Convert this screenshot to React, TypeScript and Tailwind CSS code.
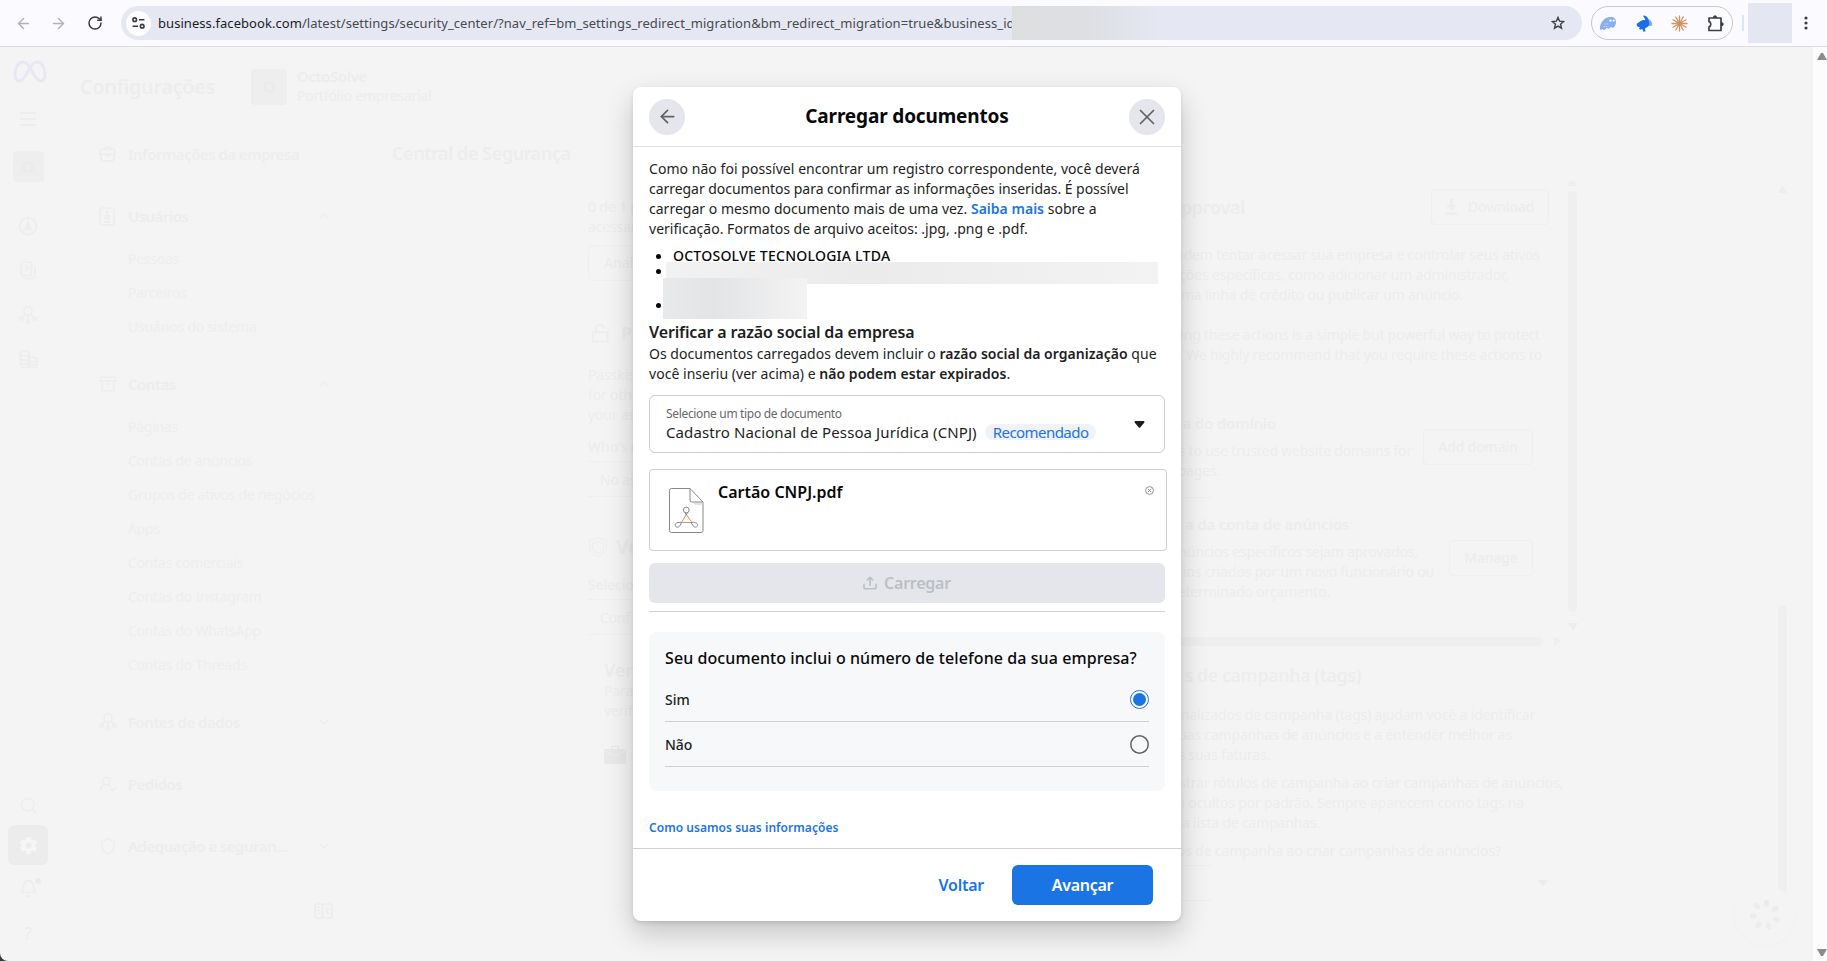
import type { ReactNode } from "react";
import {
  Archive,
  ArrowLeft,
  ArrowRight,
  Bell,
  ChevronDown,
  ChevronUp,
  LockOpen,
  RotateCw,
  Search,
  Shield,
  UserRoundCheck,
  X,
} from "lucide-react";
import { IoMdSettings } from "react-icons/io";

type NavGroup = {
  label: string;
  icon: ReactNode;
  state?: "open" | "closed";
  items?: Array<string>;
}

function NodesIcon() {
  return (
    <svg width="18" height="18" viewBox="0 0 18 18" fill="none" stroke="currentColor" strokeWidth="1.5">
      <circle cx="9" cy="4.9" r="4.1" />
      <circle cx="2.4" cy="12.8" r="1.6" />
      <circle cx="9" cy="15.8" r="1.5" />
      <circle cx="15.6" cy="12.8" r="1.6" />
      <path d="M6.300 8 3.400 11.500M9 9v5.300M11.700 8 14.600 11.500" />
    </svg>
  )
}

function BriefcaseIcon() {
  return (
    <svg width="17" height="16" viewBox="0 0 17 16" fill="none" stroke="currentColor" strokeWidth="1.7">
      <path d="M5.500 3.200a2 2 0 0 1 2-2h2a2 2 0 0 1 2 2" />
      <path d="M1 6a2.500 2.500 0 0 1 2.500-2.500h10A2.500 2.500 0 0 1 16 6v2H1ZM2 8v4a3 3 0 0 0 3 3h7a3 3 0 0 0 3-3V8M6 8.500h5L8.500 10.300Z" />
    </svg>
  )
}

function BadgeIcon() {
  return (
    <svg width="16" height="19" viewBox="0 0 16 19" fill="none" stroke="currentColor" strokeWidth="1.7">
      <rect x="1" y="1" width="14" height="17" rx="1.500" />
      <path d="M8 4v3M5 15h6" strokeWidth="1.800" />
      <ellipse cx="8" cy="10.200" rx="2.800" ry="1.500" />
    </svg>
  )
}

function LedgerIcon() {
  return (
    <svg width="18" height="19" viewBox="0 0 18 19" fill="none" stroke="currentColor" strokeWidth="1.600">
      <rect x="2.500" y="1" width="10" height="13.500" rx="1.800" />
      <path d="M.5 4.500h2M.5 8h2M.5 11.500h2M5.500 5.200h4.500M5.500 7.500h4.500M5.500 9.800h3M16 5v9.500a3 3 0 0 1-3 3H5.500" />
    </svg>
  )
}

function CoinsIcon() {
  return (
    <svg width="19" height="18" viewBox="0 0 19 18" fill="none" stroke="currentColor" strokeWidth="1.700">
      <rect x="1.500" y="1" width="9" height="16" rx="2.500" />
      <path d="M1.500 5c2 1.500 7 1.500 9 0M1.500 9c2 1.300 5 1.300 7.500.600M1.500 13c2 1.300 5 1.300 7.500.600" />
      <rect x="9" y="7.500" width="8.800" height="9.500" rx="2.500" />
      <path d="M9 10.800c2 1.300 6.800 1.300 8.800 0M9 13.800c2 1.300 6.800 1.300 8.800 0" />
    </svg>
  )
}

const NAV: Array<NavGroup> = [
  { label: "Informações da empresa", icon: <BriefcaseIcon /> },
  {
    label: "Usuários",
    icon: <BadgeIcon />,
    state: "open",
    items: ["Pessoas", "Parceiros", "Usuários do sistema"],
  },
  {
    label: "Contas",
    icon: <Archive size={18} />,
    state: "open",
    items: [
      "Páginas",
      "Contas de anúncios",
      "Grupos de ativos de negócios",
      "Apps",
      "Contas comerciais",
      "Contas do Instagram",
      "Contas do WhatsApp",
      "Contas do Threads",
    ],
  },
  { label: "Fontes de dados", icon: <NodesIcon />, state: "closed" },
  { label: "Pedidos", icon: <UserRoundCheck size={18} /> },
  { label: "Adequação e seguran...", icon: <Shield size={18} />, state: "closed" },
];

function BrowserBar() {
  return (
    <div className="flex h-[47px] shrink-0 items-center border-b border-[#dcdde3] bg-[#fbfbff] text-[#3c4043]">
      <ArrowLeft className="ml-[15px] text-[#b0b2b6]" size={17} strokeWidth={2} />
      <ArrowRight className="ml-[18px] text-[#b0b2b6]" size={17} strokeWidth={2} />
      <RotateCw className="ml-[20px] text-[#37393c]" size={16} strokeWidth={2.2} />
      <div className="relative ml-[18px] flex h-[34px] w-[1461px] items-center rounded-full bg-[#e5e8f3] pl-[5px]">
        <div className="flex size-[25px] items-center justify-center rounded-full bg-[#fdfdff]">
          <svg width="13" height="12" viewBox="0 0 13 12" fill="none" stroke="#37393c" strokeWidth="1.6">
            <circle cx="2.7" cy="2.7" r="1.8" />
            <path d="M7 2.7h5.4M.6 9.2H6" />
            <circle cx="10.2" cy="9.2" r="1.8" />
          </svg>
        </div>
        <span className="ml-[7px] w-[854px] overflow-hidden whitespace-nowrap pt-px text-[13px] tracking-[0.06px] text-[#474a4f]">
          <span className="text-[#1b1c1f]">business.facebook.com</span>
          /latest/settings/security_center/?nav_ref=bm_settings_redirect_migration&amp;bm_redirect_migration=true&amp;business_id
        </span>
        <div className="h-[34px] w-36 bg-linear-to-r from-[#dcdee0] via-[#dddfe2] to-[#e4e7f1]" />
        <svg className="absolute right-[17px] top-[10px]" width="14" height="14" viewBox="0 0 14 14" fill="none" stroke="#3c4043" strokeWidth="1.4">
          <path d="M7 1.4 8.6 5.2l4 .35-3.05 2.65.95 4L7 10.05 3.5 12.2l.95-4L1.4 5.55l4-.35Z" />
        </svg>
      </div>
      <div className="ml-[9px] flex h-[34px] w-[142px] items-center justify-between rounded-full border border-[#c7c8cd] px-[7px]">
        <svg width="18" height="15" viewBox="0 0 18 15">
          <path d="M1 13.500C.5 9 3.500 1.500 11 1c4-.3 6.200 1.800 6 5-.2 3.300-1.800 5.800-3.200 5.800-.9 0-1-.8-1.800-.8s-1.200 1.800-2.400 1.800-1-.8-1.800-.8S6.500 14 5 14s-1-.700-1.700-.700S1.400 14.400 1 13.500Z" fill="#86aff5" />
          <path d="M5.500 8h5M4.500 10.500h5" stroke="#d5e4fb" strokeDasharray="1.200 1.200" />
          <circle cx="11.500" cy="4.600" r="1.200" fill="#fff" />
          <circle cx="14.800" cy="4.600" r="1.100" fill="#fff" />
        </svg>
        <svg width="17" height="17" viewBox="0 0 17 17">
          <path d="M10.500 3.800c3.500.2 6 2.700 5.700 6.700l-3.700.7-2.500-3Z" fill="#7fabf3" />
          <path d="M7.200.500c3 0 4.800 1.700 5.500 4.700l.8 4.300-2 2.500-2.500 1.500.5 3H6.800l.4-1.500-1.700-1L4 14.800l-1-1.200 1-1.300C1.500 12.200.500 11 .700 9.600 1 8 2.500 7.700 4 6.500 5.400 5.300 7 4.600 9.300 5 9 3.300 7.500 2.500 7.200.500Z" fill="#1b6fe6" />
        </svg>
        <svg width="17" height="17" viewBox="-9 -9 18 18" stroke="#d3915f" strokeWidth="1.350">
          <path d="M0-8.500V8.500M-8.500 0H8.500M-4.250-7.360 4.250 7.360M-7.360-4.250 7.360 4.250M-7.360 4.250 7.360-4.250M-4.250 7.360 4.250-7.360" />
          <circle r="2.500" fill="#d3915f" stroke="none" />
        </svg>
        <svg width="18" height="17" viewBox="0 0 18 17" fill="none" stroke="#3c4043" strokeWidth="1.700">
          <path d="M2 3H14V15.500H2V11.800C4.400 11.300 4.400 7.200 2 6.700Z" strokeLinejoin="round" />
          <path d="M6.300 2.500a1.700 1.700 0 0 1 3.400 0ZM14.500 7.500a1.700 1.700 0 0 1 0 3.400Z" fill="#3c4043" strokeWidth="1" />
        </svg>
      </div>
      <div className="ml-[9px] h-4 w-[2px] bg-[#dde4f5]" />
      <div className="ml-[4px] h-10 w-11 bg-[#e4e7f2]" />
      <svg className="ml-[12px]" width="4" height="14" viewBox="0 0 4 14" fill="#3c4043">
        <circle cx="2" cy="2" r="1.600" />
        <circle cx="2" cy="7" r="1.600" />
        <circle cx="2" cy="12" r="1.600" />
      </svg>
    </div>
  )
}

function Rail() {
  return (
    <aside className="flex w-14 shrink-0 flex-col items-center">
      <svg className="ml-[4px] mt-[13px]" width="34" height="23" viewBox="0 0 34 23" fill="none" stroke="#e8e8f3" strokeWidth="2.800">
        <path d="M17 7.500C14.500 3.500 12.500 2 10 2 5 2 2 8 2 14.500c0 4 1.600 6.500 4.300 6.500 3 0 5-3 8-8.500C17.800 6 20 2 24.200 2 29 2 32 8 32 14.500c0 4-1.600 6.500-4.300 6.500-3.200 0-5.200-3.400-8-8.500Z" />
      </svg>
      <svg className="mt-[28px]" width="16" height="15" viewBox="0 0 16 15" stroke="currentColor" strokeWidth="2">
        <path d="M0 2h16M0 8h16M0 14h16" />
      </svg>
      <div className="mt-[25px] flex h-[31px] w-[31px] items-center justify-center rounded bg-[#eeeeee] text-base font-bold text-[#ebebeb]">O</div>
      <svg className="mt-[34px]" width="20" height="20" viewBox="0 0 20 20" fill="none" stroke="currentColor" strokeWidth="1.600">
        <circle cx="10" cy="10" r="8.400" />
        <path d="M10 5.500 13.500 14 10 12.200 6.500 14Z" fill="currentColor" />
      </svg>
      <div className="mt-[25px]"><LedgerIcon /></div>
      <div className="mt-[26px]"><NodesIcon /></div>
      <div className="mt-[26px]"><CoinsIcon /></div>
      <Search className="mt-[428px]" size={19} />
      <div className="mt-[10px] flex size-10 items-center justify-center rounded-md bg-[#ececec] text-[#f6f6f6]">
        <IoMdSettings size={21} />
      </div>
      <div className="relative mt-[14px]">
        <Bell size={19} />
        <span className="absolute -right-[3px] -top-px size-[6px] rounded-full bg-[#ebebeb]" />
      </div>
      <span className="mt-[21px] text-lg">?</span>
    </aside>
  )
}

function Sidebar() {
  return (
    <nav className="flex w-[304px] shrink-0 flex-col gap-3 pl-[43px] pt-[4px]">
      {NAV.map((group) => (
        <div key={group.label}>
          <div className="flex h-[50px] items-center">
            <span className="flex w-[29px] items-center">{group.icon}</span>
            <span className="w-[188px] whitespace-nowrap text-[15px] font-semibold tracking-[-0.5px]">{group.label}</span>
            {group.state === "open" && <ChevronUp size={16} />}
            {group.state === "closed" && <ChevronDown size={16} />}
          </div>
          {group.items && (
            <ul className="pb-[3px] pl-[29px] pt-px">
              {group.items.map((item) => (
                <li key={item} className="h-[34px] whitespace-nowrap text-sm leading-[34px] tracking-[-0.25px] text-[#eeeeee]">{item}</li>
              ))}
            </ul>
          )}
        </div>
      ))}
      <svg className="ml-[215px] mt-5" width="19" height="16" viewBox="0 0 19 16" fill="none" stroke="currentColor" strokeWidth="1.700">
        <rect x="1" y="1" width="17" height="14" rx="1.500" />
        <path d="M8.500 1v14M3.500 4.500H6M3.500 7.500H6M3.500 10.500H6M14.500 5 12 8l2.500 3" />
      </svg>
    </nav>
  )
}

function EndLine({ className, children }: { className: string; children: ReactNode }) {
  return <p className={`flex h-5 justify-end whitespace-pre leading-5 ${className}`}>{children}</p>
}

function OutlineButton({ className, children }: { className: string; children: ReactNode }) {
  return (
    <div className={`flex h-9 shrink-0 items-center rounded border border-[#efefef] font-medium ${className}`}>
      {children}
    </div>
  )
}

function LeftColumn() {
  return (
    <section className="w-[562px] shrink-0 overflow-hidden whitespace-nowrap pt-[17px] text-sm leading-5 tracking-[-0.15px]">
      <p className="font-medium">0 de 1 p</p>
      <p>acessar</p>
      <OutlineButton className="mt-2 w-[120px] pl-[15px]">Anal</OutlineButton>
      <div className="mt-10 flex h-6 items-center gap-[11px] text-lg font-semibold">
        <LockOpen className="ml-[2px]" size={20} /> P
      </div>
      <div className="mt-5">
        <p>Passke</p>
        <p>for oth</p>
        <p>your as</p>
      </div>
      <p className="mt-3 font-medium">Who's r</p>
      <div className="mt-1 h-9 border-y border-[#efefef] pl-3 leading-9">No as</div>
      <div className="mt-[38px] flex h-6 items-center gap-2 text-xl font-semibold">
        <svg width="20" height="22" viewBox="0 0 20 22" fill="none" stroke="currentColor">
          <path d="M10 1.500C7.500 3 4.500 3.800 1.500 4v7c0 5 4 8 8.500 9.800 4.500-1.800 8.500-4.800 8.500-9.800V4C15.500 3.800 12.500 3 10 1.500Z" />
          <path d="M10 5.500C8.200 6.500 6.300 7 4.500 7.200v4c0 3 2.500 5 5.500 6.300 3-1.300 5.500-3.300 5.500-6.300v-4C13.700 7 11.800 6.500 10 5.500Z" />
        </svg>
        Ve
      </div>
      <p className="mt-4 font-medium">Selecio</p>
      <div className="mt-1 h-9 border-y border-[#efefef] pl-3 leading-9">Conf</div>
      <div className="mt-[25px] pl-4">
        <p className="text-lg font-semibold leading-5">Ver</p>
        <p className="mt-px">Para</p>
        <p>verif</p>
        <svg className="mt-[24px]" width="22" height="19" viewBox="0 0 22 19" fill="#e9e9e9">
          <path d="M7 4V.8h8V4h6a1 1 0 0 1 1 1v13a1 1 0 0 1-1 1H1a1 1 0 0 1-1-1V5a1 1 0 0 1 1-1Zm1.500 0h5V2h-5Z" />
          <path d="m1 6 10 5 10-5" fill="none" stroke="#f2f2f2" />
        </svg>
      </div>
    </section>
  )
}

function RightColumn() {
  return (
    <section className="w-[450px] shrink-0 text-sm tracking-[-0.18px]">
      <div className="flex h-[452px]">
        <div className="w-[418px] pt-[9px]">
          <div className="flex items-center">
            <EndLine className="w-[95px] text-lg font-semibold tracking-[-0.3px]">pproval</EndLine>
            <OutlineButton className="ml-[186px] w-[118px] gap-[10px] pl-[13px]">
              <svg width="13" height="16" viewBox="0 0 13 16" fill="currentColor">
                <path d="M4.500 0h4v6H12L6.500 12 1 6h3.500ZM.5 13.500h12V16H.5Z" />
              </svg>
              Download
            </OutlineButton>
          </div>
          <div className="mt-5">
            <EndLine className="w-[390px]">podem tentar acessar sua empresa e controlar seus ativos</EndLine>
            <EndLine className="w-[358px]">ações específicas, como adicionar um administrador,</EndLine>
            <EndLine className="w-[313px]">uma linha de crédito ou publicar um anúncio.</EndLine>
          </div>
          <div className="mt-5">
            <EndLine className="w-[390px]">ing these actions is a simple but powerful way to protect</EndLine>
            <EndLine className="w-[392px]">. We highly recommend that you require these actions to</EndLine>
          </div>
          <div className="mt-12 flex gap-[11px]">
            <div className="w-[262px]">
              <EndLine className="w-[126px] text-[15px] font-semibold">a do domínio</EndLine>
              <EndLine className="mt-2 w-[262px]">s to use trusted website domains for</EndLine>
              <EndLine className="w-[70px]">pages.</EndLine>
            </div>
            <OutlineButton className="mt-4 w-[110px] justify-center">Add domain</OutlineButton>
          </div>
          <div className="mt-4 w-[63px] border-t border-[#efefef]" />
          <div className="mt-4 flex gap-[15px]">
            <div className="w-[284px]">
              <EndLine className="w-[199px] text-[15px] font-semibold">a da conta de anúncios</EndLine>
              <EndLine className="mt-2 w-[268px]">núncios específicos sejam aprovados,</EndLine>
              <EndLine className="w-[284px]">cios criados por um novo funcionário ou</EndLine>
              <EndLine className="w-[180px]">determinado orçamento.</EndLine>
            </div>
            <OutlineButton className="mt-[26px] w-[84px] justify-center">Manage</OutlineButton>
          </div>
        </div>
        <div className="flex w-[9px] flex-col items-center">
          <div className="mt-px h-[5px] w-[9px] rounded-t-full bg-[#efefef]" />
          <div className="mt-[5px] h-[421px] w-[9px] rounded-full bg-[#efefef]" />
          <svg className="mt-[11px]" width="10" height="8" fill="#ededed"><path d="M0 0h10L5 8Z" /></svg>
        </div>
      </div>
      <div className="mt-[5px] flex h-[9px] items-center gap-[11px]">
        <div className="h-[9px] w-[393px] rounded-r-full bg-[#efefef]" />
        <svg width="7" height="9" fill="#ededed"><path d="M0 0 7 4.500 0 9Z" /></svg>
      </div>
      <EndLine className="mt-[19px] w-[211px] text-lg font-semibold tracking-[-0.5px]">s de campanha (tags)</EndLine>
      <div className="mt-5">
        <EndLine className="w-[385px]">onalizados de campanha (tags) ajudam você a identificar</EndLine>
        <EndLine className="w-[362px]">suas campanhas de anúncios e a entender melhor as</EndLine>
        <EndLine className="w-[120px]">as suas faturas.</EndLine>
      </div>
      <div className="mt-2">
        <EndLine className="w-[413px]">ostrar rótulos de campanha ao criar campanhas de anúncios,</EndLine>
        <EndLine className="w-[374px]">m ocultos por padrão. Sempre aparecem como tags na</EndLine>
        <EndLine className="w-[170px]">na lista de campanhas.</EndLine>
      </div>
      <EndLine className="mt-2 w-[351px] font-medium tracking-[-0.25px]">os de campanha ao criar campanhas de anúncios?</EndLine>
      <div className="mt-1 h-9 w-[63px] border-y border-[#efefef]">
        <svg className="ml-[388px] mt-[14px]" width="10" height="7" fill="#ececec"><path d="M0 0h10L5 7Z" /></svg>
      </div>
    </section>
  )
}

function BusinessSettings() {
  return (
    <div className="relative flex h-[914px] overflow-hidden bg-[#f4f4f4] text-[#ededed]">
      <Rail />
      <div className="flex min-w-0 flex-1 flex-col">
        <header className="flex h-[80px] shrink-0 items-center pl-6">
          <h1 className="w-[171px] text-xl font-semibold tracking-[-0.4px]">Configurações</h1>
          <div className="flex size-9 items-center justify-center rounded bg-[#eeeeee] font-bold text-[#ebebeb]">O</div>
          <div className="ml-[10px] text-sm leading-5 tracking-[-0.2px]">
            <p className="-mt-0.5 text-[15px] font-semibold tracking-[-0.4px]">OctoSolve</p>
            <p>Portfólio empresarial</p>
          </div>
        </header>
        <div className="-mt-0.5 flex">
          <Sidebar />
          <main className="flex-1 pl-8">
            <h2 className="h-[55px] pt-[14px] text-lg font-semibold leading-7 tracking-[-0.43px]">Central de Segurança</h2>
            <div className="flex pl-[196px]">
              <LeftColumn />
              <RightColumn />
              <div className="flex flex-col items-center pl-[178px]">
                <svg className="mt-[5px]" width="9" height="8" fill="#ededed"><path d="M0 8h9L4.500 0Z" /></svg>
                <div className="mt-[412px] h-[290px] w-[9px] rounded-full bg-[#efefef]" />
              </div>
            </div>
          </main>
        </div>
      </div>
      <div className="absolute bottom-[16px] right-[32px] flex size-[60px] items-center justify-center rounded-full bg-[#f4f4f4] shadow-[0_1px_4px_#00000005]">
        <svg width="32" height="32" viewBox="-16 -16 32 32" fill="#ececf0">
          {[8, 59, 111, 162, 214, 265, 317].map((angle) => (
            <ellipse key={angle} cy="-12" rx="2.600" ry="3.600" transform={`rotate(${angle})`} />
          ))}
        </svg>
      </div>
      <div className="flex w-[14px] shrink-0 flex-col items-end justify-between bg-[#fcfcfc] pb-1 pt-[5px]">
        <svg width="10" height="8" fill="#8b8b8b"><path d="M0 8 4 1h2l4 7Z" /></svg>
        <svg width="10" height="8" fill="#8b8b8b"><path d="M0 0h10L6 7H4Z" /></svg>
      </div>
    </div>
  )
}

function PdfIcon() {
  return (
    <svg width="35" height="45" viewBox="0 0 35 45" fill="none" stroke="#85878a">
      <path d="M2.500.5H21L34 14V42.500a2 2 0 0 1-2 2H2.500a2 2 0 0 1-2-2V2.500a2 2 0 0 1 2-2Z" />
      <path d="M24 14.500H33.500V17H26Z" fill="#e3e4e6" stroke="none" />
      <path d="M21 .5V12a2 2 0 0 0 2 2H34" />
      <path d="M17.300 26.500 12.500 34.500M17.300 26.500 23 34.500M11.500 34.500H23" stroke="#d9935f" />
      <circle cx="17.300" cy="22" r="2.900" />
      <path d="M16 24.500 17.300 27 18.600 24.500" />
      <path d="M12.700 34.500C9 34 6 35 6.200 37.200c.3 2.600 3.800 2.600 4.800.3ZM22 34.500c3.700-.5 6.800.5 6.600 2.700-.3 2.600-3.600 2.600-4.600.3Z" />
    </svg>
  )
}

function RadioRow({ label, checked }: { label: string; checked?: boolean }) {
  return (
    <div className="flex h-[45px] items-center justify-between border-b border-[#ced0d4]">
      <span className="pt-0.5 text-sm font-medium">{label}</span>
      {checked ? (
        <span className="flex size-[19px] items-center justify-center rounded-full border-[1.5px] border-[#1b74e4] bg-white">
          <span className="size-[13px] rounded-full bg-[#1b74e4]" />
        </span>
      ) : (
        <svg width="19" height="19" viewBox="0 0 19 19" fill="none" stroke="#606266" strokeWidth="1.500">
          <circle cx="9.500" cy="9.500" r="8.700" />
        </svg>
      )}
    </div>
  )
}

function UploadDialog() {
  return (
    <div className="absolute left-[633px] top-[87px] flex h-[834px] w-[548px] flex-col rounded-lg bg-white text-[#1c1e21] shadow-[0_12px_28px_0_#00000033,0_2px_4px_0_#0000001a]">
      <div className="flex h-[60px] shrink-0 items-center justify-between border-b border-[#e1e2e5] px-4">
        <button className="flex size-9 items-center justify-center rounded-full bg-[#e4e6eb] text-[#606266]">
          <ArrowLeft size={21} strokeWidth={2} />
        </button>
        <h2 className="text-[19px] font-bold tracking-[-0.15px] text-[#080809]">Carregar documentos</h2>
        <button className="flex size-9 items-center justify-center rounded-full bg-[#e4e6eb] text-[#606266]">
          <X size={26} strokeWidth={1.600} />
        </button>
      </div>

      <div className="h-[701px] shrink-0 px-4 pt-3 text-sm leading-5">
        <div className="whitespace-nowrap">
          <p className="tracking-[0.05px]">Como não foi possível encontrar um registro correspondente, você deverá</p>
          <p className="tracking-[-0.04px]">carregar documentos para confirmar as informações inseridas. É possível</p>
          <p className="tracking-[0.02px]">carregar o mesmo documento mais de uma vez. <a className="font-semibold text-[#1b74e4]">Saiba mais</a> sobre a</p>
          <p className="tracking-[0.02px]">verificação. Formatos de arquivo aceitos: .jpg, .png e .pdf.</p>
        </div>
        <div className="relative h-[83px] pl-[7px] pt-[7px]">
          <div className="flex h-5 items-center">
            <span className="size-[5px] rounded-full bg-[#080809]" />
            <span className="ml-3 font-medium tracking-[0.25px] text-[#080809]">OCTOSOLVE TECNOLOGIA LTDA</span>
          </div>
          <div className="mt-[3px] size-[5px] rounded-full bg-[#080809]" />
          <div className="mt-[29px] size-[5px] rounded-full bg-[#080809]" />
          <div className="absolute left-[17px] top-[23px] h-[22px] w-[492px] bg-linear-to-r from-[#f2f2f2] via-[#ebebeb] via-40% to-[#f3f3f3]" />
          <div className="absolute left-[14px] top-[39px] h-[41px] w-36 bg-linear-to-r from-[#e9eaec] via-[#e3e4e6] via-35% to-[#f3f3f3]" />
        </div>
        <h3 className="text-base font-semibold leading-[21px] tracking-[-0.13px]">Verificar a razão social da empresa</h3>
        <div className="mt-px whitespace-nowrap tracking-[0.03px]">
          <p>Os documentos carregados devem incluir o <b className="font-semibold">razão social da organização</b> que</p>
          <p>você inseriu (ver acima) e <b className="font-semibold">não podem estar expirados</b>.</p>
        </div>

        <div className="mt-[11px] flex h-[58px] items-center justify-between rounded-md border border-[#ccced2] pl-4 pr-[19px]">
          <div className="-mt-0.5">
            <p className="text-xs leading-[18px] tracking-[-0.33px] text-[#65676b]">Selecione um tipo de documento</p>
            <p className="flex items-center whitespace-nowrap text-[15px] leading-[19px] tracking-[0.1px]">
              Cadastro Nacional de Pessoa Jurídica (CNPJ)
              <span className="ml-2 h-4 rounded-full bg-[#f0f2f5] px-2 leading-4 tracking-[-0.55px] text-[#1b74e4]">Recomendado</span>
            </p>
          </div>
          <svg width="11" height="7" fill="#1c1e21"><path d="M1.500 0h8a1 1 0 0 1 .7 1.700L6.200 6.500a1 1 0 0 1-1.400 0L.8 1.700A1 1 0 0 1 1.500 0Z" /></svg>
        </div>

        <div className="mt-4 flex h-[82px] w-[518px] rounded border border-[#ccced2] pl-[19px] pt-[18px]">
          <PdfIcon />
          <span className="-mt-[6px] ml-[14px] text-base font-semibold leading-[21px] text-[#080809]">Cartão CNPJ.pdf</span>
          <svg className="ml-auto mr-3 mt-[-2px]" width="9" height="9" viewBox="0 0 9 9" fill="none" stroke="#85878a" strokeWidth=".9">
            <circle cx="4.500" cy="4.500" r="3.900" />
            <path d="m2.800 2.800 3.400 3.400M6.200 2.800 2.800 6.200" />
          </svg>
        </div>

        <button className="mt-3 flex h-10 w-full items-center justify-center gap-[7px] rounded-md bg-[#e4e6eb] text-base font-semibold tracking-[-0.25px] text-[#bcc0c4]">
          <svg width="14" height="14" viewBox="0 0 15 14" fill="none" stroke="currentColor" strokeWidth="1.700" strokeLinecap="round" strokeLinejoin="round">
            <path d="M1 8.500v2.700a2 2 0 0 0 2 2h9a2 2 0 0 0 2-2V8.500M7.500 9.500V1M4.600 3.700 7.500.9l2.900 2.800" />
          </svg>
          Carregar
        </button>
        <div className="mt-2 border-t border-[#ced0d4]" />

        <div className="mt-5 h-[159px] rounded-lg bg-[#f7f8fa] px-4 pt-4">
          <h3 className="mb-[9px] whitespace-nowrap text-base font-medium leading-5 tracking-[0.08px] text-[#080809]">Seu documento inclui o número de telefone da sua empresa?</h3>
          <RadioRow label="Sim" checked />
          <RadioRow label="Não" />
        </div>

        <a className="mt-[27px] block text-xs font-semibold leading-5 tracking-[0.04px] text-[#1b74e4]">Como usamos suas informações</a>
      </div>

      <div className="flex flex-1 items-center justify-end border-t border-[#ced0d4] pr-7 text-base font-semibold tracking-[-0.25px]">
        <button className="mr-7 text-[#1b74e4]">Voltar</button>
        <button className="h-10 w-[141px] rounded-md bg-[#1b74e4] text-white">Avançar</button>
      </div>
    </div>
  )
}

export default function App() {
  return (
    <div className="relative h-[961px] w-[1827px] overflow-hidden bg-[#3a3a3c] font-['Noto_Sans','Open_Sans',sans-serif]">
      <div className="h-full overflow-hidden rounded-bl-lg">
        <BrowserBar />
        <BusinessSettings />
      </div>
      <UploadDialog />
    </div>
  )
}
